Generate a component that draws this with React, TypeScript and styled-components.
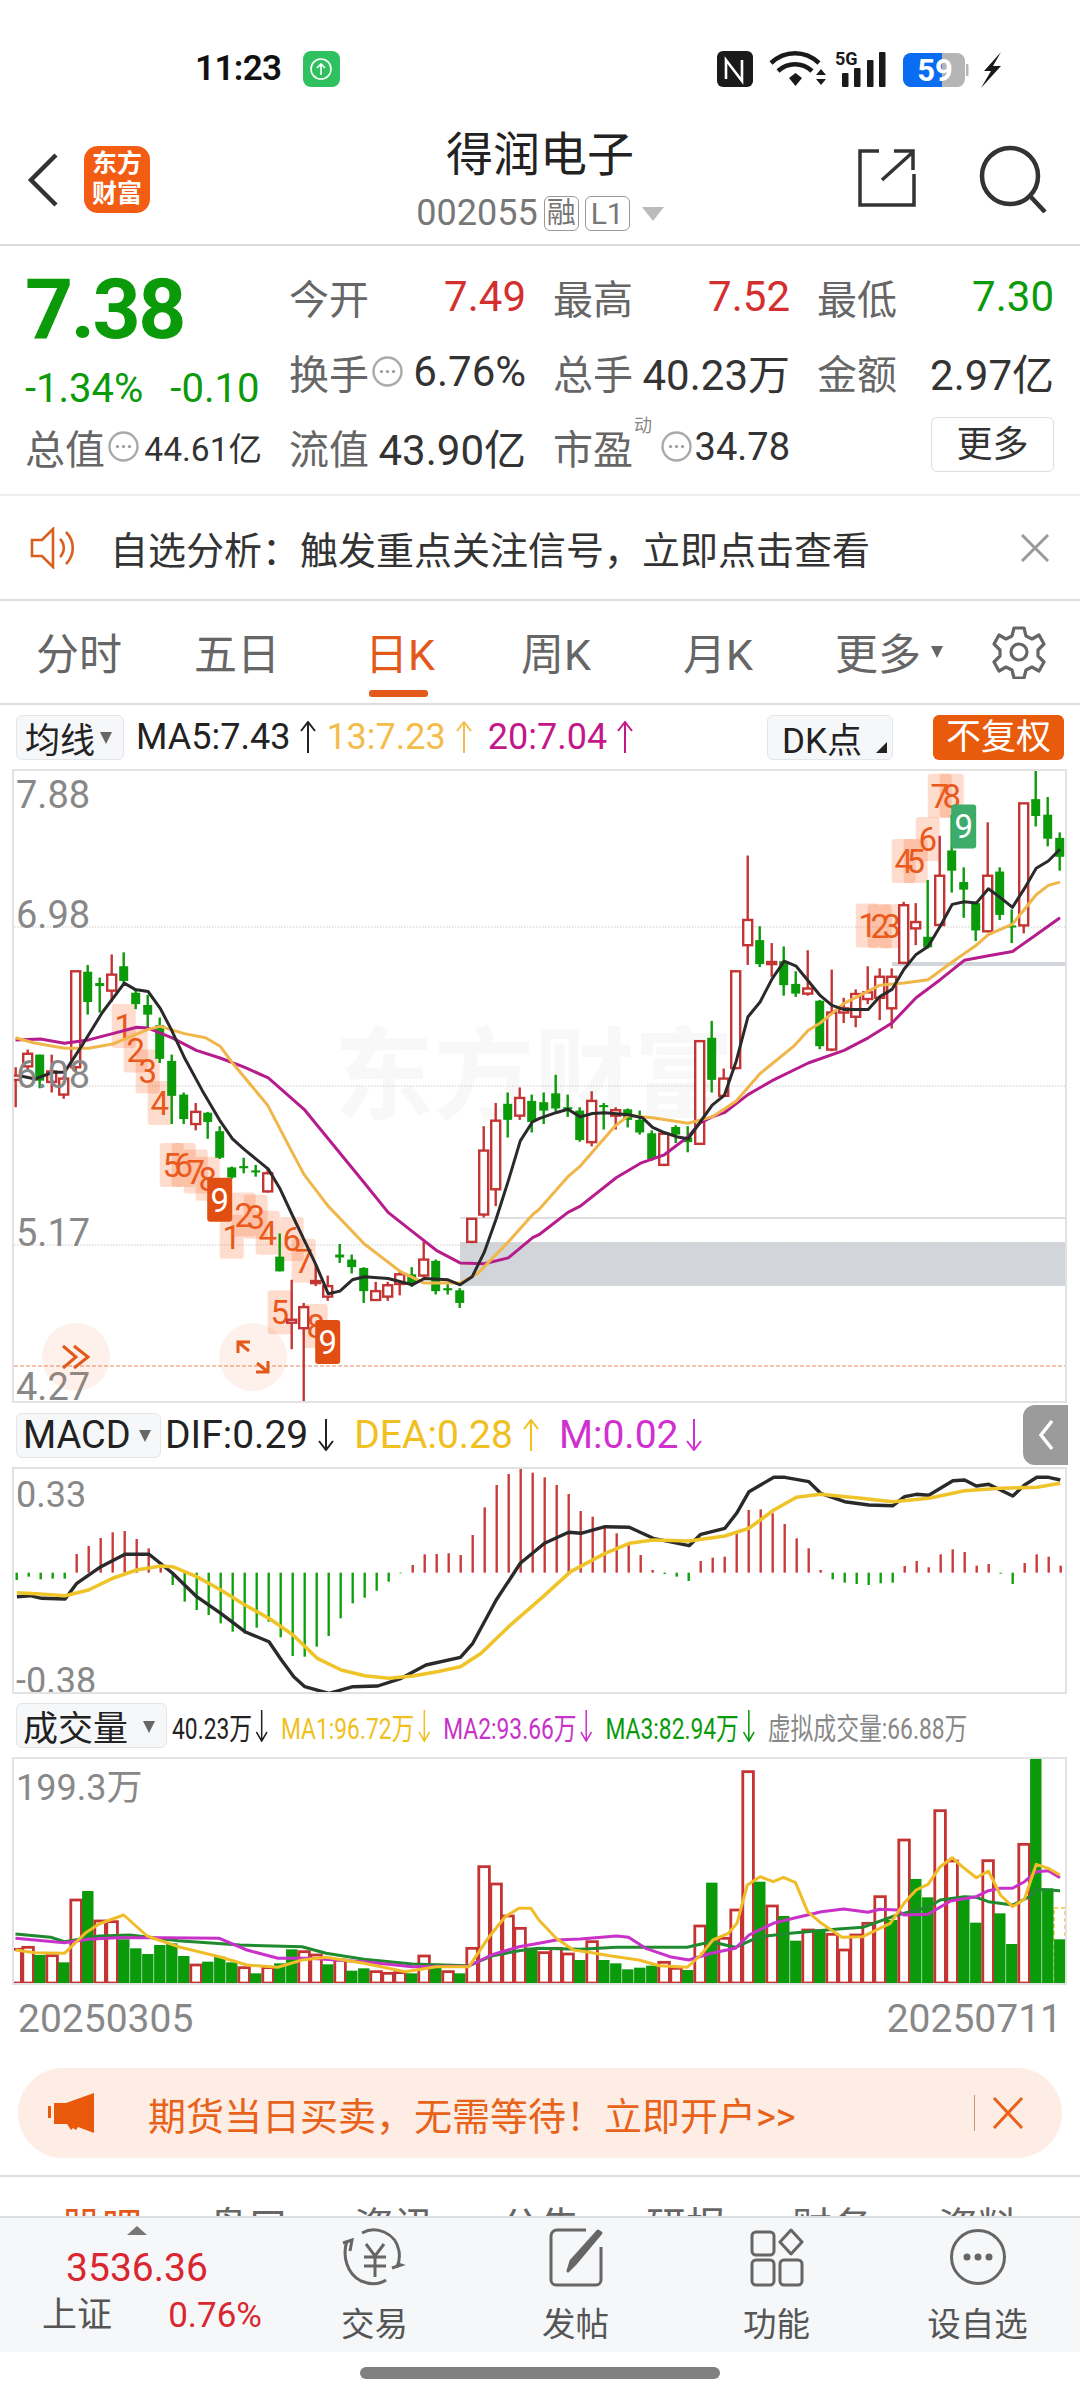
import React from "react";
import styled, { createGlobalStyle } from "styled-components";

const RED = "#c53434";
const GREEN = "#0a9a0a";
const ORANGE = "#e2591a";

const GlobalStyle = createGlobalStyle`
  html, body {
    margin: 0;
    padding: 0;
    background: #fff;
    font-family: Roboto, "Noto Sans CJK SC", sans-serif;
  }
`;

const Page = styled.div`
  position: relative;
  width: 1080px;
  height: 2400px;
  overflow: hidden;
  background: #fff;
  color: #333;
`;

/* ---------- status bar ---------- */
const StatusBar = styled.div`
  height: 105px;
  box-sizing: border-box;
  padding: 51px 76px 0 195px;
  display: flex;
  align-items: flex-start;
`;

const Clock = styled.span`
  font-size: 35px;
  line-height: 36px;
  font-weight: 600;
  color: #111;
  letter-spacing: -0.6px;
`;

const UploadBadge = styled.span`
  margin-left: 21px;
  width: 37px;
  height: 36px;
  border-radius: 8px;
  background: #2fc15f;
  display: flex;
  align-items: center;
  justify-content: center;
`;

const StatusIcons = styled.div`
  margin-left: auto;
  display: flex;
  align-items: flex-start;
`;

/* ---------- header ---------- */
const Header = styled.header`
  height: 141px;
  box-sizing: border-box;
  border-bottom: 2px solid #dedede;
  padding: 0 33px 0 27px;
  display: flex;
  align-items: flex-start;
`;

const BackButton = styled.svg`
  margin-top: 48px;
  width: 32px;
  height: 54px;
`;

const Logo = styled.div`
  margin: 41px 0 0 25px;
  width: 66px;
  height: 67px;
  border-radius: 14px;
  background: #f25c13;
  color: #fff;
  font-size: 25px;
  line-height: 30px;
  font-weight: 700;
  text-align: center;
  padding-top: 3px;
  box-sizing: border-box;
`;

const TitleBlock = styled.div`
  position: absolute;
  left: 0;
  right: 0;
  top: 126px;
  display: flex;
  flex-direction: column;
  align-items: center;
  pointer-events: none;
`;

const StockName = styled.div`
  font-size: 47px;
  line-height: 58px;
  color: #222;
`;

const CodeRow = styled.div`
  margin-top: 10px;
  display: flex;
  align-items: center;
  gap: 6px;
  color: #777;
  font-size: 36px;
  line-height: 38px;
`;

const CodeBadge = styled.span`
  height: 33px;
  padding: 0 ${(p) => p.$pad}px;
  border: 1.5px solid #999;
  border-radius: 6px;
  font-size: ${(p) => p.$size}px;
  line-height: 33px;
  color: #777;
`;

const HeaderTools = styled.div`
  margin-left: auto;
  margin-top: 40px;
  display: flex;
  gap: 62px;
`;

/* ---------- quote ---------- */
const Quote = styled.section`
  height: 250px;
  box-sizing: border-box;
  border-bottom: 2px solid #efefef;
  padding: 13px 24px 0 25px;
  display: grid;
  grid-template-columns: repeat(4, 237px);
  grid-template-rows: repeat(3, 75px);
  column-gap: 27px;
`;

const PriceBlock = styled.div`
  grid-row: 1 / 3;
  grid-column: 1;
  display: flex;
  flex-direction: column;
`;

const BigPrice = styled.div`
  font-size: 84px;
  line-height: 92px;
  font-weight: 700;
  color: ${GREEN};
  margin-top: 5px;
  letter-spacing: -2.5px;
`;

const ChangeRow = styled.div`
  display: flex;
  gap: 27px;
  margin-top: 11px;
  font-size: 40px;
  line-height: 44px;
  color: ${GREEN};
`;

const Cell = styled.div`
  display: flex;
  align-items: center;
  justify-content: space-between;
  position: relative;
  min-width: 0;
`;

const CellLabel = styled.span`
  display: flex;
  align-items: center;
  font-size: 40px;
  color: #666;
  white-space: nowrap;
`;

const CellValue = styled.span`
  font-size: ${(p) => p.$size || 42}px;
  color: ${(p) => p.$color || "#333"};
  white-space: nowrap;
`;

const SmallSup = styled.sup`
  position: absolute;
  left: 81px;
  top: 7px;
  font-size: 18px;
  line-height: 20px;
  color: #888;
`;

const MoreButton = styled.button`
  justify-self: end;
  width: 123px;
  height: 55px;
  margin-top: 8px;
  padding: 0;
  background: #fff;
  border: 1.5px solid #ddd;
  border-radius: 6px;
  font: inherit;
  font-size: 36px;
  line-height: 50px;
  color: #333;
`;

/* ---------- notice ---------- */
const Notice = styled.div`
  height: 105px;
  box-sizing: border-box;
  border-bottom: 2px solid #dedede;
  padding: 0 30px;
  display: flex;
  align-items: center;
  font-size: 38px;
  color: #333;
`;

const NoticeText = styled.span`
  margin-left: 30px;
  flex: 1;
  white-space: nowrap;
`;

/* ---------- period tabs ---------- */
const PeriodTabs = styled.nav`
  height: 104px;
  box-sizing: border-box;
  border-bottom: 2px solid #dedede;
  display: flex;
  align-items: center;
  font-size: 43px;
  color: #666;
`;

const PeriodTab = styled.div`
  position: relative;
  width: ${(p) => p.$width}px;
  height: 100%;
  display: flex;
  align-items: center;
  justify-content: center;
  padding-bottom: 2px;
  box-sizing: border-box;
  color: ${(p) => (p.$active ? ORANGE : "#666")};
  ${(p) =>
    p.$active &&
    `&::after {
      content: "";
      position: absolute;
      left: 53px;
      bottom: 6px;
      width: 59px;
      height: 7px;
      border-radius: 3px;
      background: ${ORANGE};
    }`}
`;

const CaretDown = styled.span`
  display: inline-block;
  margin-left: 10px;
  margin-top: 2px;
  border-left: 6px solid transparent;
  border-right: 6px solid transparent;
  border-top: 12px solid ${(p) => p.$color || "#666"};
`;

const Gear = styled.svg`
  margin-left: 22px;
  width: 54px;
  height: 54px;
`;

/* ---------- indicator rows ---------- */
const IndicatorRow = styled.div`
  position: relative;
  height: ${(p) => p.$height}px;
  box-sizing: border-box;
  padding: 0 16px;
  display: flex;
  align-items: center;
  font-size: ${(p) => p.$size || 36}px;
  color: #222;
`;

const SelectButton = styled.div`
  height: 45px;
  width: ${(p) => p.$width}px;
  box-sizing: border-box;
  flex: none;
  border: 1.5px solid #e3e5e8;
  border-radius: 6px;
  background: #f6f7f9;
  font-size: ${(p) => p.$font || 35}px;
  color: #222;
  padding-left: ${(p) => p.$pad}px;
  display: flex;
  align-items: center;
  position: relative;
`;

const Reading = styled.span`
  display: inline-flex;
  align-items: center;
  gap: ${(p) => p.$inner ?? 8}px;
  margin-left: ${(p) => p.$gap}px;
  color: ${(p) => p.$color || "#222"};
  white-space: nowrap;
`;

const CornerMark = styled.span`
  position: absolute;
  right: 5px;
  bottom: 6px;
  border-left: 11px solid transparent;
  border-bottom: 11px solid #222;
`;

const AdjustButton = styled.div`
  margin-left: 40px;
  width: 131px;
  height: 45px;
  flex: none;
  border-radius: 6px;
  background: #e85a0c;
  color: #fff;
  font-size: 35px;
  line-height: 45px;
  text-align: center;
`;

const CollapseTab = styled.div`
  position: absolute;
  right: 12px;
  top: 2px;
  width: 45px;
  height: 60px;
  border-radius: 12px 0 0 12px;
  background: #9b9b9b;
  display: flex;
  align-items: center;
  justify-content: center;
`;

const CondensedRow = styled.div`
  display: flex;
  align-items: center;
  margin-left: 5px;
  font-size: 30px;
  transform: scaleX(0.76);
  transform-origin: left center;
  white-space: nowrap;
`;

const CondensedItem = styled.span`
  display: inline-flex;
  align-items: center;
  gap: 3px;
  margin-right: 15px;
  color: ${(p) => p.$color || "#222"};
`;

/* ---------- charts ---------- */
const ChartBox = styled.div`
  position: relative;
  margin-left: 12px;
  width: 1055px;
  height: ${(p) => p.$height}px;
  box-sizing: border-box;
  border: 2px solid #e2e2e2;
  overflow: hidden;
  background: #fff;
`;

const ChartSvg = styled.svg`
  position: absolute;
  left: 0;
  top: 0;
  width: 1051px;
  height: 100%;
`;

const AxisLabel = styled.span`
  position: absolute;
  left: ${(p) => p.$left ?? 2}px;
  top: ${(p) => p.$top}px;
  font-size: ${(p) => p.$size || 38}px;
  line-height: 40px;
  color: #888;
`;

const Watermark = styled.div`
  position: absolute;
  left: 320px;
  top: 246px;
  font-size: 100px;
  line-height: 120px;
  font-weight: 700;
  color: #f8f8f8;
  white-space: nowrap;
`;

const RoundAction = styled.div`
  position: absolute;
  left: ${(p) => p.$left}px;
  top: 552px;
  width: 68px;
  height: 68px;
  border-radius: 50%;
  background: rgba(245, 120, 60, 0.1);
  display: flex;
  align-items: center;
  justify-content: center;
`;

const DateRow = styled.div`
  height: 71px;
  box-sizing: border-box;
  padding: 12px 18px 0 18px;
  display: flex;
  justify-content: space-between;
  font-size: 39px;
  line-height: 44px;
  color: #888;
`;

/* ---------- ad banner ---------- */
const AdBanner = styled.div`
  margin: 12px 18px 0;
  height: 90px;
  box-sizing: border-box;
  border-radius: 45px;
  background: #fdede4;
  padding: 0 38px 0 30px;
  display: flex;
  align-items: center;
  color: #e8621a;
  font-size: 38px;
`;

const AdText = styled.span`
  margin-left: 54px;
  flex: 1;
  white-space: nowrap;
`;

const AdSeparator = styled.span`
  width: 1px;
  height: 36px;
  background: #cf9473;
  margin-right: 17px;
`;

/* ---------- bottom ---------- */
const InfoTabs = styled.div`
  margin-top: 17px;
  border-top: 2px solid #dedede;
  padding: 28px 0 0 29px;
  display: grid;
  grid-template-columns: repeat(7, 146px);
  font-size: 40px;
  line-height: 46px;
  color: #666;
  text-align: center;
`;

const InfoTab = styled.span`
  color: ${(p) => (p.$active ? ORANGE : "#666")};
`;

const BottomBar = styled.div`
  position: absolute;
  left: 0;
  right: 0;
  top: 2216px;
  height: 136px;
  box-sizing: border-box;
  border-top: 2px solid #dcdee1;
  background: #f6f7f9;
  display: grid;
  grid-template-columns: 274px repeat(4, 201px);
`;

const IndexCell = styled.div`
  display: flex;
  flex-direction: column;
  align-items: center;
  padding-top: 8px;
  color: #d9262f;
`;

const IndexCaret = styled.span`
  border-left: 10px solid transparent;
  border-right: 10px solid transparent;
  border-bottom: 9px solid #777;
`;

const IndexValue = styled.div`
  margin-top: 11px;
  font-size: 39px;
  line-height: 44px;
`;

const IndexLine = styled.div`
  width: 220px;
  margin: 5px 0 0 30px;
  display: flex;
  justify-content: space-between;
  font-size: 35px;
  line-height: 42px;
`;

const IndexName = styled.span`
  color: #555;
`;

const BarItem = styled.div`
  display: flex;
  flex-direction: column;
  align-items: center;
  padding-top: 9px;
  font-size: 33.5px;
  line-height: 40px;
  color: #555;
`;

const BarLabel = styled.span`
  margin-top: 18px;
`;

const HomeIndicator = styled.div`
  position: absolute;
  left: 360px;
  top: 2367px;
  width: 360px;
  height: 12px;
  border-radius: 6px;
  background: #808080;
`;

/* ---------- small drawings ---------- */
const Arrow = ({ up, color = "#222", h = 32 }: { up?: boolean; color?: string; h?: number }) => (
  <svg width="20" height={h} viewBox={`0 0 20 ${h}`}>
    <path
      d={up ? `M10 ${h}V1M3 10l7-9 7 9` : `M10 0V${h - 1}M3 ${h - 10}l7 9 7-9`}
      fill="none"
      stroke={color}
      strokeWidth="2"
    />
  </svg>
);

const DotsCircle = () => (
  <svg width="31" height="31" viewBox="0 0 31 31" style={{ marginLeft: 3 }}>
    <circle cx="15.5" cy="15.5" r="14" fill="none" stroke="#aaa" strokeWidth="2.4" />
    <circle cx="9.5" cy="15.5" r="1.6" fill="#999" />
    <circle cx="15.5" cy="15.5" r="1.6" fill="#999" />
    <circle cx="21.5" cy="15.5" r="1.6" fill="#999" />
  </svg>
);

/* ---------- data, read off the reference in page coordinates ---------- */
const kx = (i: number) => 16.7 + 12 * i;
const ky = (v: number) => 760 + v / 2.376;

// [high, body top, body bottom, low, rising]
const CANDLES: [number, number, number, number, number][] = [
  [730, 750, 760, 825, 1], [688, 698, 728, 735, 1], [700, 700, 762, 780, 0], [700, 740, 765, 790, 1],
  [750, 757, 795, 805, 1], [502, 502, 730, 740, 1], [487, 503, 575, 605, 0], [517, 530, 537, 600, 0],
  [462, 510, 548, 575, 1], [457, 490, 525, 535, 0], [545, 553, 580, 592, 0], [558, 582, 605, 635, 0],
  [612, 630, 710, 720, 0], [700, 715, 798, 865, 0], [790, 795, 853, 865, 0], [815, 836, 865, 880, 1],
  [836, 838, 860, 900, 0], [870, 882, 945, 948, 0], [966, 968, 992, 995, 0], [945, 965, 970, 982, 0],
  [962, 975, 980, 990, 0], [968, 982, 1025, 1028, 1], [1125, 1180, 1215, 1215, 0], [1235, 1330, 1337, 1400, 1],
  [1290, 1300, 1350, 1528, 1], [1200, 1238, 1243, 1250, 1], [1225, 1250, 1275, 1285, 1], [1150, 1175, 1182, 1195, 0],
  [1175, 1187, 1205, 1220, 0], [1205, 1207, 1262, 1290, 0], [1240, 1262, 1283, 1285, 1], [1240, 1248, 1275, 1285, 1],
  [1215, 1222, 1245, 1272, 1], [1205, 1222, 1245, 1252, 0], [1145, 1187, 1225, 1230, 1], [1187, 1190, 1262, 1270, 0],
  [1240, 1255, 1260, 1270, 0], [1255, 1260, 1290, 1302, 0], [1090, 1090, 1145, 1148, 1], [870, 928, 1080, 1087, 1],
  [815, 857, 1020, 1060, 1], [790, 817, 855, 897, 0], [778, 803, 845, 855, 1], [795, 810, 860, 885, 0],
  [790, 813, 833, 865, 0], [748, 792, 828, 835, 0], [795, 825, 830, 848, 0], [825, 833, 903, 907, 0],
  [787, 810, 908, 918, 1], [815, 820, 825, 878, 0], [825, 832, 845, 878, 1], [828, 830, 855, 873, 0],
  [833, 855, 885, 890, 0], [880, 887, 948, 952, 0], [885, 888, 962, 965, 1], [868, 872, 890, 910, 0],
  [870, 897, 908, 932, 0], [668, 668, 912, 914, 1], [620, 660, 760, 790, 0], [733, 757, 798, 800, 1],
  [502, 502, 732, 735, 1], [227, 380, 440, 487, 1], [395, 428, 485, 492, 0], [435, 480, 485, 515, 1],
  [443, 478, 535, 560, 0], [502, 532, 555, 563, 0], [452, 543, 555, 560, 1], [570, 572, 680, 687, 0],
  [498, 600, 688, 692, 1], [565, 590, 600, 625, 1], [545, 556, 610, 635, 1], [490, 552, 568, 580, 1],
  [495, 515, 565, 618, 1], [495, 515, 590, 638, 1], [337, 345, 482, 485, 1], [340, 385, 400, 440, 1],
  [285, 420, 445, 448, 0], [180, 275, 392, 395, 1], [130, 215, 263, 315, 0], [255, 290, 308, 375, 0],
  [340, 340, 405, 430, 0], [148, 275, 407, 409, 1], [255, 265, 368, 380, 0], [355, 393, 398, 435, 0],
  [103, 103, 393, 412, 1], [22, 93, 133, 158, 0], [88, 130, 187, 205, 0], [172, 185, 230, 263, 0],
];

type Pt = [number, number];
const joinPts = (left: Pt[], right: Pt[], sy: number, oy: number) =>
  [
    ...left.map(([x, y]) => `${(x / 2.904).toFixed(1)},${(oy + y / sy).toFixed(1)}`),
    ...right.map(([x, y]) => `${(540 + x / 2.904).toFixed(1)},${(oy + y / sy).toFixed(1)}`),
  ].join(" ");

const MA5 = joinPts(
  [[60,750],[105,758],[155,742],[190,742],[240,680],[300,600],[364,530],[395,545],[433,550],[468,590],[500,640],[540,710],[590,785],[640,855],[678,900],[712,925],[782,972],[817,1020],[851,1080],[886,1140],[921,1200],[956,1268],[990,1262],[1026,1235],[1061,1228],[1130,1232],[1200,1247],[1235,1232],[1304,1235],[1339,1247],[1374,1228],[1409,1170],[1444,1090],[1479,1000],[1514,905],[1549,860]],
  [[0,852],[49,838],[84,830],[120,848],[155,840],[190,838],[260,843],[300,850],[330,873],[364,885],[399,895],[433,900],[468,860],[503,820],[538,797],[573,715],[607,610],[642,575],[677,520],[712,478],[747,490],[782,525],[817,560],[851,583],[886,593],[956,593],[990,562],[1025,545],[1060,497],[1095,462],[1130,443],[1165,395],[1200,343],[1235,337],[1270,340],[1305,306],[1340,327],[1375,350],[1410,305],[1444,257],[1479,240],[1513,212]],
  2.376, 760
);
const MA13 = joinPts(
  [[48,660],[100,672],[190,685],[260,685],[330,675],[433,640],[468,633],[538,650],[600,660],[642,680],[678,720],[780,820],[850,930],[886,985],[956,1060],[1061,1150],[1165,1215],[1235,1243],[1339,1243],[1390,1220],[1479,1145],[1550,1080]],
  [[0,1068],[84,990],[120,965],[220,870],[260,845],[330,850],[433,863],[503,848],[573,810],[642,745],[740,680],[782,642],[817,625],[886,578],[990,535],[1060,530],[1130,522],[1200,480],[1270,440],[1305,415],[1375,390],[1444,320],[1479,298],[1513,290]],
  2.376, 760
);
const MA20 = joinPts(
  [[48,665],[120,663],[190,673],[260,665],[330,650],[400,635],[433,637],[503,660],[573,690],[642,708],[712,730],[782,755],[886,830],[956,900],[1061,1005],[1130,1075],[1200,1120],[1270,1165],[1339,1195],[1409,1197],[1479,1183],[1550,1135]],
  [[0,1128],[84,1075],[120,1060],[225,992],[295,958],[364,938],[433,895],[468,862],[503,848],[538,838],[607,795],[677,762],[782,720],[886,690],[956,660],[1025,625],[1095,565],[1165,522],[1235,476],[1305,465],[1375,455],[1444,415],[1513,375]],
  2.376, 760
);

// [index, label, zoom y of centre]
const MARKS: [number, string, number][] = [
  [9, "1", 632], [10, "2", 690], [11, "3", 740], [12, "4", 815], [13, "5", 962], [14, "6", 962], [15, "7", 978],
  [16, "8", 995], [18, "1", 1133], [19, "2", 1080], [20, "3", 1085], [21, "4", 1123], [23, "6", 1138], [24, "7", 1190],
  [22, "5", 1312], [25, "8", 1345], [71, "1", 393], [72, "2", 395], [73, "3", 395], [74, "4", 240], [75, "5", 240],
  [76, "6", 188], [77, "7", 85], [78, "8", 85],
];
const NINES: [number, number, string][] = [
  [17, 1045, "#e14e12"], [26, 1383, "#e14e12"], [79, 158, "#3dab6a"],
];

// end of each MACD bar in the zoomed rows (baseline 518)
const MACD_BARS = [540,530,538,536,536,462,438,414,397,393,417,445,495,555,605,630,645,670,695,700,683,665,712,768,770,740,708,655,610,593,572,545,520,495,463,462,460,465,405,322,255,222,202,218,232,255,282,333,350,380,400,430,465,510,522,530,543,483,473,470,400,330,328,340,372,415,445,510,538,548,552,555,550,548,498,483,502,463,448,456,497,492,521,552,489,463,470,497];
const mp = (pts: Pt[]) => pts.map(([x, y]) => `${(x / 1.452).toFixed(1)},${(1400 + y / 3).toFixed(1)}`).join(" ");
const DIF = mp([[26,590],[45,587],[62,595],[96,597],[113,550],[148,500],[183,463],[218,463],[252,520],[287,590],[322,640],[357,695],[392,725],[410,780],[428,830],[444,860],[479,880],[514,860],[550,858],[584,835],[620,795],[670,772],[688,730],[722,600],[757,490],[792,430],[827,397],[845,400],[880,380],[915,382],[950,415],[1002,437],[1019,403],[1054,385],[1071,340],[1089,275],[1125,232],[1141,232],[1176,245],[1193,280],[1228,305],[1263,315],[1298,317],[1315,290],[1332,283],[1350,286],[1385,242],[1402,240],[1419,258],[1437,253],[1472,288],[1489,255],[1507,232],[1524,232],[1541,240]]);
const DEA = mp([[26,578],[60,582],[96,587],[130,570],[165,535],[200,510],[235,498],[252,500],[287,530],[322,570],[357,615],[392,655],[427,705],[462,775],[497,810],[531,827],[566,835],[601,828],[636,815],[670,800],[700,760],[740,680],[790,590],[830,515],[880,460],[915,430],[950,420],[1002,423],[1054,408],[1089,385],[1125,330],[1158,292],[1193,283],[1245,293],[1298,305],[1350,295],[1402,272],[1454,265],[1507,262],[1541,250]]);

// top of each volume bar in the zoomed rows, [top, rising]
const VOLUMES: [number, number][] = [
  [748,1],[742,1],[765,0],[767,1],[787,0],[600,1],[573,0],[663,1],[665,1],[718,0],[745,0],[762,0],[735,0],[730,0],[768,0],[795,1],[785,0],[770,0],[787,0],[803,1],[820,0],[803,1],[790,0],[748,0],[755,1],[765,1],[793,0],[780,1],[812,0],[805,0],[815,1],[820,1],[818,1],[820,0],[768,1],[800,0],[815,1],[820,0],[745,1],[500,1],[552,1],[648,1],[685,1],[743,0],
  [758,1],[745,1],[762,1],[780,0],[725,1],[780,0],[790,0],[808,0],[803,0],[797,0],[787,1],[805,1],[810,0],[678,1],[548,0],[715,1],[630,1],[215,1],[545,0],[618,1],[648,0],[722,0],[690,1],[688,0],[703,1],[750,1],[705,1],[670,1],[590,1],[660,0],[420,1],[537,0],[592,0],[332,1],[483,1],[590,0],[668,0],[482,1],[640,0],[732,0],[433,1],[175,0],[565,0],[718,0],
];
const VMA1 = joinPts(
  [[48,750],[105,758],[190,760],[250,700],[290,672],[362,645],[430,708],[520,740],[640,770],[720,795],[810,802],[880,780],[950,772],[1060,790],[1180,815],[1270,800],[1365,800],[1420,715],[1470,650],[1510,625],[1545,625],[1568,660]],
  [[50,715],[100,750],[155,758],[210,768],[290,780],[350,797],[430,802],[470,765],[505,720],[550,700],[575,670],[605,555],[642,530],[680,545],[710,532],[745,548],[780,635],[820,670],[880,712],[940,710],[1020,670],[1060,610],[1095,570],[1130,553],[1165,500],[1200,473],[1235,505],[1270,533],[1305,513],[1340,585],[1375,620],[1410,597],[1444,493],[1479,505],[1513,525]],
  3, 1700
);
const VMA2 = joinPts(
  [[48,715],[190,728],[260,718],[340,713],[480,713],[640,715],[720,750],[810,775],[900,775],[1060,785],[1200,800],[1365,798],[1430,765],[1510,740],[1568,730]],
  [[50,720],[120,717],[225,708],[260,712],[310,745],[380,770],[435,780],[500,760],[570,745],[610,705],[680,670],[730,657],[820,635],[885,627],[955,637],[990,628],[1040,630],[1060,645],[1130,643],[1195,603],[1270,590],[1305,572],[1340,565],[1375,565],[1410,545],[1444,515],[1479,512],[1513,533]],
  3, 1700
);
const VMA3 = joinPts(
  [[48,702],[150,712],[190,725],[290,708],[380,705],[520,722],[700,735],[880,740],[950,760],[1060,778],[1200,792],[1365,797],[1430,768],[1510,752],[1568,745]],
  [[120,748],[225,742],[430,742],[500,725],[570,742],[640,710],[730,700],[860,688],[940,682],[1040,645],[1130,622],[1165,600],[1235,590],[1270,592],[1305,605],[1375,615],[1425,590],[1444,568],[1513,572]],
  3, 1700
);

const PERIODS: { label: string; width: number; active?: boolean }[] = [
  { label: "分时", width: 158 },
  { label: "五日", width: 158 },
  { label: "日K", width: 168, active: true },
  { label: "周K", width: 144 },
  { label: "月K", width: 180 },
];

const INFO_TABS = ["股吧", "盘口", "资讯", "公告", "研报", "财务", "资料"];

const KChart = () => (
  <ChartSvg viewBox="15 771 1051 630" preserveAspectRatio="none">
    <rect x="461" y="1242" width="605" height="44" fill="#d2d5da" />
    <rect x="893" y="962" width="173" height="4" fill="#d2d5da" />
    <line x1="461" x2="1066" y1="1218" y2="1218" stroke="#d4d4d4" strokeWidth="1.5" />
    {[927, 1086, 1245].map((y) => (
      <line key={y} x1="15" x2="1066" y1={y} y2={y} stroke="#ccc" strokeWidth="1" strokeDasharray="1.5 1.5" />
    ))}
    <line x1="15" x2="1066" y1="1366" y2="1366" stroke="#e8875a" strokeWidth="1" strokeDasharray="4 2" />
    {MARKS.map(([i, label, v]) => (
      <g key={`${i}-${v}`}>
        <rect x={kx(i) - 12} y={ky(v) - 22} width="24" height="44" rx="3" fill="rgba(250,110,50,0.24)" />
        <text x={kx(i)} y={ky(v) + 12} fontSize="33" fill="#e8581a" textAnchor="middle">
          {label}
        </text>
      </g>
    ))}
    {CANDLES.map(([hi, top, bot, lo, up], i) => {
      const x = kx(i);
      const color = up ? RED : GREEN;
      const h = Math.max(ky(bot) - ky(top), 2);
      return (
        <g key={i}>
          <line x1={x} x2={x} y1={ky(hi)} y2={ky(lo)} stroke={color} strokeWidth="2.4" />
          <rect
            x={x - 4.5}
            y={ky(top)}
            width="9"
            height={h}
            fill={up ? "#fff" : color}
            stroke={up ? color : "none"}
            strokeWidth="2.4"
          />
        </g>
      );
    })}
    <polyline points={MA20} fill="none" stroke="#b71c8c" strokeWidth="3" strokeLinejoin="round" />
    <polyline points={MA13} fill="none" stroke="#f0b64a" strokeWidth="3" strokeLinejoin="round" />
    <polyline points={MA5} fill="none" stroke="#2a2a2a" strokeWidth="3" strokeLinejoin="round" />
    {NINES.map(([i, v, fill]) => (
      <g key={i}>
        <rect x={kx(i) - 12.5} y={ky(v) - 22} width="25" height="44" rx="3" fill={fill} />
        <text x={kx(i)} y={ky(v) + 12} fontSize="33" fill="#fff" textAnchor="middle">
          9
        </text>
      </g>
    ))}
  </ChartSvg>
);

const MacdChart = () => (
  <ChartSvg viewBox="15 1469 1051 223" preserveAspectRatio="none">
    {MACD_BARS.map((v, i) => {
      const y = 1400 + v / 3;
      const base = 1400 + 518 / 3;
      return (
        <line
          key={i}
          x1={kx(i) + 1}
          x2={kx(i) + 1}
          y1={base}
          y2={y}
          stroke={v < 518 ? "#c93c3c" : "#12a012"}
          strokeWidth="2.4"
        />
      );
    })}
    <polyline points={DIF} fill="none" stroke="#2a2a2a" strokeWidth="3.4" strokeLinejoin="round" />
    <polyline points={DEA} fill="none" stroke="#efc428" strokeWidth="3.6" strokeLinejoin="round" />
  </ChartSvg>
);

const VolumeChart = () => (
  <ChartSvg viewBox="15 1759 1051 224" preserveAspectRatio="none">
    <rect x="1055" y="1908" width="11" height="76" fill="#fff" stroke="#efc428" strokeWidth="1.5" strokeDasharray="4 3" />
    {VOLUMES.map(([v, up], i) => {
      const y = 1700 + v / 3;
      return up ? (
        <rect key={i} x={kx(i) - 4.9} y={y} width="10.6" height={1983 - y} fill="#fff" stroke={RED} strokeWidth="2.8" />
      ) : (
        <rect key={i} x={kx(i) - 5.6} y={y} width="11.4" height={1984 - y} fill={GREEN} />
      );
    })}
    <polyline points={VMA3} fill="none" stroke="#1f8a2e" strokeWidth="3" strokeLinejoin="round" />
    <polyline points={VMA2} fill="none" stroke="#c832c8" strokeWidth="3" strokeLinejoin="round" />
    <polyline points={VMA1} fill="none" stroke="#f0bc28" strokeWidth="3" strokeLinejoin="round" />
  </ChartSvg>
);

export default function App() {
  return (
    <Page>
      <GlobalStyle />
      <StatusBar>
        <Clock>11:23</Clock>
        <UploadBadge>
          <svg width="24" height="24" viewBox="0 0 24 24" fill="none" stroke="#fff" strokeWidth="1.6">
            <circle cx="12" cy="12" r="10" />
            <path d="M12 18V7M8 11l4-4 4 4" />
          </svg>
        </UploadBadge>
        <StatusIcons>
          <svg width="287" height="38" viewBox="717 51 287 38">
            <rect x="717" y="51" width="36" height="36" rx="6" fill="#1a1a1a" />
            <path d="M726 79V60l16 21V60" fill="none" stroke="#fff" strokeWidth="2.6" />
            <path d="M771 63c14-13 34-13 48 0" fill="none" stroke="#1a1a1a" strokeWidth="4.5" />
            <path d="M778 71c10-9 24-9 34 0" fill="none" stroke="#1a1a1a" strokeWidth="4.5" />
            <path d="M789 78l6.500-5 6.500 5-6.500 8z" fill="#1a1a1a" />
            <path d="M816 75l5-6 5 6zM816 79h10l-5 6z" fill="#1a1a1a" />
            <text x="835" y="65" fontSize="18" fontWeight="700" fill="#1a1a1a">
              5G
            </text>
            <rect x="842" y="73" width="6.500" height="14" rx="1" fill="#1a1a1a" />
            <rect x="854" y="68" width="6.500" height="19" rx="1" fill="#1a1a1a" />
            <rect x="867" y="60" width="6.500" height="27" rx="1" fill="#1a1a1a" />
            <rect x="879" y="52" width="6.500" height="35" rx="1" fill="#1a1a1a" />
            <rect x="903" y="53" width="62" height="34" rx="8" fill="#b5b5b5" />
            <path d="M911 53h31v34h-31a8 8 0 0 1-8-8V61a8 8 0 0 1 8-8z" fill="#0a6cf0" />
            <path d="M966 64c2.500 0 2.500 0 2.500 3v6c0 3 0 3-2.500 3z" fill="#b5b5b5" />
            <text x="935" y="81" fontSize="31" fontWeight="700" fill="#fff" textAnchor="middle">
              59
            </text>
            <path d="M1001 52l-17 19h7l-10 17 20-22h-8l8-14z" fill="#1a1a1a" />
          </svg>
        </StatusIcons>
      </StatusBar>

      <Header>
        <BackButton viewBox="0 0 32 54" fill="none" stroke="#333" strokeWidth="4.5">
          <path d="M29 2L4 27l25 25" />
        </BackButton>
        <Logo>
          东方
          <br />
          财富
        </Logo>
        <TitleBlock>
          <StockName>得润电子</StockName>
          <CodeRow>
            <span>002055</span>
            <CodeBadge $pad={2} $size={29}>融</CodeBadge>
            <CodeBadge $pad={5} $size={30}>L1</CodeBadge>
            <CaretDown $color="#bbb" style={{ borderLeftWidth: 11, borderRightWidth: 11, borderTopWidth: 14, marginLeft: 6 }} />
          </CodeRow>
        </TitleBlock>
        <HeaderTools>
          <svg width="60" height="60" viewBox="0 0 60 60" fill="none" stroke="#333" strokeWidth="3.5" style={{ marginTop: 3 }}>
            <path d="M22 3H3v54h54V26" />
            <path d="M25 32L56 4M37 3h19v19" />
          </svg>
          <svg width="68" height="68" viewBox="0 0 68 68" fill="none" stroke="#333" strokeWidth="4.5">
            <circle cx="31" cy="31" r="28" />
            <path d="M51 51l15 16" />
          </svg>
        </HeaderTools>
      </Header>

      <Quote>
        <PriceBlock>
          <BigPrice>7.38</BigPrice>
          <ChangeRow>
            <span>-1.34%</span>
            <span>-0.10</span>
          </ChangeRow>
        </PriceBlock>
        <Cell>
          <CellLabel>今开</CellLabel>
          <CellValue $color="#d32f2f">7.49</CellValue>
        </Cell>
        <Cell>
          <CellLabel>最高</CellLabel>
          <CellValue $color="#d32f2f">7.52</CellValue>
        </Cell>
        <Cell>
          <CellLabel>最低</CellLabel>
          <CellValue $color={GREEN}>7.30</CellValue>
        </Cell>
        <Cell style={{ gridColumn: 2 }}>
          <CellLabel>
            换手
            <DotsCircle />
          </CellLabel>
          <CellValue>6.76%</CellValue>
        </Cell>
        <Cell>
          <CellLabel>总手</CellLabel>
          <CellValue>40.23万</CellValue>
        </Cell>
        <Cell>
          <CellLabel>金额</CellLabel>
          <CellValue>2.97亿</CellValue>
        </Cell>
        <Cell>
          <CellLabel>
            总值
            <DotsCircle />
          </CellLabel>
          <CellValue $size={33.5}>44.61亿</CellValue>
        </Cell>
        <Cell>
          <CellLabel>流值</CellLabel>
          <CellValue>43.90亿</CellValue>
        </Cell>
        <Cell>
          <CellLabel>
            市盈
            <span style={{ width: 25 }} />
            <DotsCircle />
          </CellLabel>
          <SmallSup>动</SmallSup>
          <CellValue $size={38}>34.78</CellValue>
        </Cell>
        <MoreButton>更多</MoreButton>
      </Quote>

      <Notice>
        <svg width="50" height="42" viewBox="0 0 50 42" fill="none" stroke="#d9601c" strokeWidth="2.6">
          <path d="M2 13h10L23 2v38L12 29H2z" />
          <path d="M30 12c5 5 5 13 0 18M36 5c9 9 9 23 0 32" />
        </svg>
        <NoticeText>自选分析：触发重点关注信号，立即点击查看</NoticeText>
        <svg width="30" height="30" viewBox="0 0 30 30" stroke="#999" strokeWidth="3">
          <path d="M2 2l26 26M28 2L2 28" />
        </svg>
      </Notice>

      <PeriodTabs>
        {PERIODS.map((p) => (
          <PeriodTab key={p.label} $width={p.width} $active={p.active}>
            {p.label}
          </PeriodTab>
        ))}
        <PeriodTab $width={162}>
          更多
          <CaretDown />
        </PeriodTab>
        <Gear viewBox="0 0 54 54" fill="none" stroke="#666" strokeWidth="3.2">
          <path d="M22 3h10l2 8 6 3 7-4 5 9-6 6v6l6 6-5 9-7-4-6 3-2 8H22l-2-8-6-3-7 4-5-9 6-6v-6l-6-6 5-9 7 4 6-3z" strokeLinejoin="round" />
          <circle cx="27" cy="27" r="8" />
        </Gear>
      </PeriodTabs>

      <IndicatorRow $height={64}>
        <SelectButton $width={108} $pad={8}>
          均线
          <CaretDown style={{ marginLeft: 5 }} />
        </SelectButton>
        <Reading $gap={12}>
          MA5:7.43
          <Arrow up />
        </Reading>
        <Reading $gap={8} $color="#f4bc4a">
          13:7.23
          <Arrow up color="#f4bc4a" />
        </Reading>
        <Reading $gap={14} $color="#c2188a">
          20:7.04
          <Arrow up color="#c2188a" />
        </Reading>
        <SelectButton $width={126} $pad={14} style={{ marginLeft: "auto" }}>
          DK点
          <CornerMark />
        </SelectButton>
        <AdjustButton>不复权</AdjustButton>
      </IndicatorRow>

      <ChartBox $height={634}>
        <Watermark>东方财富</Watermark>
        <KChart />
        <AxisLabel $top={4}>7.88</AxisLabel>
        <AxisLabel $top={124}>6.98</AxisLabel>
        <AxisLabel $top={284}>6.08</AxisLabel>
        <AxisLabel $top={442}>5.17</AxisLabel>
        <AxisLabel $top={596}>4.27</AxisLabel>
        <RoundAction $left={28}>
          <svg width="30" height="26" viewBox="0 0 30 26" fill="none" stroke={ORANGE} strokeWidth="3">
            <path d="M2 2l13 11L2 24M13 2l14 11-14 11" />
          </svg>
        </RoundAction>
        <RoundAction $left={205}>
          <svg width="36" height="34" viewBox="0 0 36 34" fill="none" stroke={ORANGE} strokeWidth="3">
            <path d="M3 13V2h12M3 2l11 9M33 21v11H21M33 32l-11-9" />
          </svg>
        </RoundAction>
      </ChartBox>

      <IndicatorRow $height={64} $size={39}>
        <SelectButton $width={145} $pad={6} $font={38}>
          MACD
          <CaretDown style={{ marginLeft: 8 }} />
        </SelectButton>
        <Reading $gap={4} $inner={8}>
          DIF:0.29
          <Arrow />
        </Reading>
        <Reading $gap={18} $inner={8} $color="#f0c020">
          DEA:0.28
          <Arrow up color="#f0c020" />
        </Reading>
        <Reading $gap={18} $inner={6} $color="#d030d0">
          M:0.02
          <Arrow color="#d030d0" />
        </Reading>
        <CollapseTab>
          <svg width="18" height="32" viewBox="0 0 18 32" fill="none" stroke="#fff" strokeWidth="3.5">
            <path d="M15 2L4 16l11 14" />
          </svg>
        </CollapseTab>
      </IndicatorRow>

      <ChartBox $height={227}>
        <MacdChart />
        <AxisLabel $top={6} $size={36}>0.33</AxisLabel>
        <AxisLabel $top={192} $size={36}>-0.38</AxisLabel>
      </ChartBox>

      <IndicatorRow $height={63} $size={30}>
        <SelectButton $width={151} $pad={6}>
          成交量
          <CaretDown style={{ marginLeft: 15 }} />
        </SelectButton>
        <CondensedRow>
          <CondensedItem>
            40.23万
            <Arrow />
          </CondensedItem>
          <CondensedItem $color="#f0c020">
            MA1:96.72万
            <Arrow color="#f0c020" />
          </CondensedItem>
          <CondensedItem $color="#c832c8">
            MA2:93.66万
            <Arrow color="#c832c8" />
          </CondensedItem>
          <CondensedItem $color={GREEN}>
            MA3:82.94万
            <Arrow color={GREEN} />
          </CondensedItem>
          <CondensedItem $color="#888">虚拟成交量:66.88万</CondensedItem>
        </CondensedRow>
      </IndicatorRow>

      <ChartBox $height={228}>
        <VolumeChart />
        <AxisLabel $top={9} $size={36}>199.3万</AxisLabel>
      </ChartBox>

      <DateRow>
        <span>20250305</span>
        <span>20250711</span>
      </DateRow>

      <AdBanner>
        <svg width="46" height="40" viewBox="0 0 46 40" fill="#e8590c">
          <path d="M0 13h3v12H0zM6 10h12L46 0v40L30 34l-2 3-3-2-2 2-4-6H6z" />
        </svg>
        <AdText>期货当日买卖，无需等待！立即开户&gt;&gt;</AdText>
        <AdSeparator />
        <svg width="32" height="32" viewBox="0 0 32 32" stroke="#e8621a" strokeWidth="3">
          <path d="M2 1l28 30M30 1L2 31" />
        </svg>
      </AdBanner>

      <InfoTabs>
        {INFO_TABS.map((t, i) => (
          <InfoTab key={t} $active={i === 0}>
            {t}
          </InfoTab>
        ))}
      </InfoTabs>

      <BottomBar>
        <IndexCell>
          <IndexCaret />
          <IndexValue>3536.36</IndexValue>
          <IndexLine>
            <IndexName>上证</IndexName>
            <span>0.76%</span>
          </IndexLine>
        </IndexCell>
        <BarItem>
          <svg width="66" height="60" viewBox="0 0 66 60" fill="none" stroke="#666" strokeWidth="3">
            <path d="M20 6C34-2 54 6 57 24c1 7 0 12-2 16" />
            <path d="M5 14c-5 15 0 33 14 40 10 4 19 3 25-1" />
            <path d="M1 16l9-3-2 11M50 41l9-3-3-1" />
            <path d="M24 17l9 12 9-12M22 30h22M22 39h22M33 29v21" />
          </svg>
          <BarLabel>交易</BarLabel>
        </BarItem>
        <BarItem>
          <svg width="56" height="60" viewBox="0 0 56 60" fill="none" stroke="#666" strokeWidth="3">
            <path d="M38 3H9a6 6 0 0 0-6 6v44a5 5 0 0 0 5 5h40a5 5 0 0 0 5-5V20" />
            <path d="M50 4l3 2-26 31-7 7 3-10z" fill="#666" strokeLinejoin="round" />
          </svg>
          <BarLabel>发帖</BarLabel>
        </BarItem>
        <BarItem>
          <svg width="54" height="60" viewBox="0 0 54 60" fill="none" stroke="#666" strokeWidth="3">
            <rect x="2" y="5" width="22" height="23" rx="4" />
            <path d="M41 3l11 12-11 12-11-12z" strokeLinejoin="round" />
            <rect x="2" y="33" width="22" height="25" rx="4" />
            <rect x="30" y="33" width="22" height="25" rx="4" />
          </svg>
          <BarLabel>功能</BarLabel>
        </BarItem>
        <BarItem>
          <svg width="58" height="60" viewBox="0 0 58 60" fill="none" stroke="#666" strokeWidth="3">
            <circle cx="29" cy="30" r="26.5" />
            <circle cx="18" cy="30" r="2" fill="#666" />
            <circle cx="29" cy="30" r="2" fill="#666" />
            <circle cx="40" cy="30" r="2" fill="#666" />
          </svg>
          <BarLabel>设自选</BarLabel>
        </BarItem>
      </BottomBar>
      <HomeIndicator />
    </Page>
  );
}
